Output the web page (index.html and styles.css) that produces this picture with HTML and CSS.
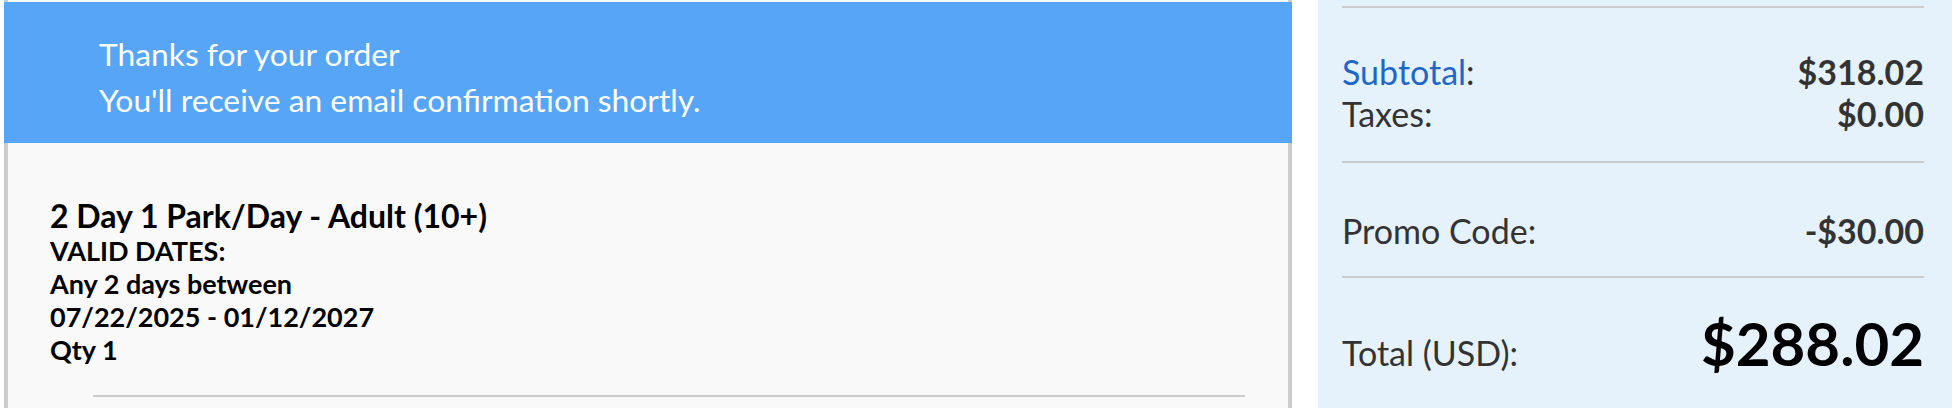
FILE: index.html
```html
<!DOCTYPE html>
<html lang="en">
<head>
    <meta charset="UTF-8">
    <meta name="viewport" content="width=device-width, initial-scale=1.0">
    <title>Order Confirmation</title>
    <link rel="stylesheet" href="styles.css">
</head>
<body>
    <div class="page">
        <div class="order-card">
            <div class="banner">
                <p>Thanks for your order</p>
                <p>You'll receive an email confirmation shortly.</p>
            </div>
            <div class="items">
                <div class="item">
                    <div class="item-name">2 Day 1 Park/Day - Adult (10+)</div>
                    <div class="item-line">VALID DATES:</div>
                    <div class="item-line">Any 2 days between</div>
                    <div class="item-line">07/22/2025 - 01/12/2027</div>
                    <div class="item-line">Qty 1</div>
                </div>
                <div class="item-rule"></div>
            </div>
        </div>
        <div class="summary">
            <div class="rule"></div>
            <div class="summary-group">
                <div class="summary-row">
                    <span class="label"><a href="#">Subtotal</a>:</span>
                    <span class="value">$318.02</span>
                </div>
                <div class="summary-row">
                    <span class="label">Taxes:</span>
                    <span class="value">$0.00</span>
                </div>
            </div>
            <div class="rule"></div>
            <div class="summary-group promo">
                <div class="summary-row">
                    <span class="label">Promo Code:</span>
                    <span class="value">-$30.00</span>
                </div>
            </div>
            <div class="rule"></div>
            <div class="summary-group total">
                <div class="summary-row">
                    <span class="label">Total (USD):</span>
                    <span class="value">$288.02</span>
                </div>
            </div>
        </div>
    </div>
</body>
</html>
```

FILE: styles.css
```css
body {
    margin: 0;
    font-family: Lato, "Open Sans", sans-serif;
    background-color: #fff;
    color: #333;
    overflow: hidden;
}

.page {
    display: flex;
    gap: 26px;
    height: 408px;
}

.order-card {
    width: 1288px;
    margin-left: 4px;
    padding-top: 2px;
    background-color: #f9f9f9;
    border-left: 4px solid #ccc;
    border-right: 4px solid #ccc;
    box-sizing: border-box;
}

.banner {
    background-color: #57a5f7;
    color: #fff;
    margin: 0 -4px;
    padding: 29px 0 20px 95px;
    font-size: 31.8px;
    line-height: 46px;
}
.banner p {
    margin: 0;
}

.items {
    padding: 0 43px 0 42px;
}
.item {
    padding-top: 56px;
    color: #000;
    font-weight: bold;
    font-size: 27px;
    line-height: 33px;
}
.item-name {
    font-size: 32px;
    line-height: 34.5px;
}
.item-rule {
    margin: 29px 0 0 43px;
    height: 2px;
    background-color: #ccc;
}

.summary {
    flex: 1;
    background-color: #e5f2fc;
    padding: 6px 28px 0 24px;
}
.rule {
    height: 2px;
    background-color: #ccc;
}
.summary-group {
    padding: 42.5px 0 26.5px;
}
.summary-row {
    display: flex;
    justify-content: space-between;
    align-items: baseline;
    font-size: 34px;
    line-height: 42px;
}
.summary-row a {
    color: #1f66c9;
    text-decoration: none;
}
.value {
    font-weight: bold;
}
.promo {
    padding: 46px 0 24px;
}
.promo .summary-row {
    line-height: 43px;
}
.total {
    padding: 44px 0 0;
}
.total .summary-row {
    line-height: 43px;
}
.total .value {
    font-size: 60px;
    color: #000;
}
```
